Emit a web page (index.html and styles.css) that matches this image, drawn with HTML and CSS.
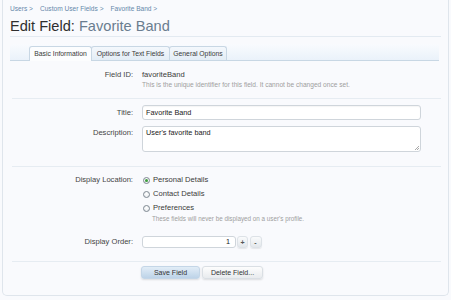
FILE: index.html
```html
<!DOCTYPE html>
<html lang="en">
<head>
<meta charset="utf-8">
<title>Edit Field: Favorite Band</title>
<link rel="stylesheet" href="styles.css">
</head>
<body>
<div class="page">
  <nav class="crumbs">
    <a class="crumb" href="#">Users &gt;</a>
    <a class="crumb" href="#">Custom User Fields &gt;</a>
    <a class="crumb" href="#">Favorite Band &gt;</a>
  </nav>
  <h1 class="title">Edit Field: <span class="title-sub">Favorite Band</span></h1>

  <div class="tabs">
    <span class="tab tab-basic active">Basic Information</span>
    <span class="tab tab-options">Options for Text Fields</span>
    <span class="tab tab-general">General Options</span>
  </div>

  <form class="form">
    <section class="group group-id">
      <div class="row">
        <div class="label">Field ID:</div>
        <div class="value">
          <div class="static">favoriteBand</div>
          <div class="hint">This is the unique identifier for this field. It cannot be changed once set.</div>
        </div>
      </div>
    </section>

    <section class="group group-text">
      <div class="row">
        <div class="label label-input">Title:</div>
        <div class="value"><div class="input">Favorite Band</div></div>
      </div>
      <div class="row row-desc">
        <div class="label label-area">Description:</div>
        <div class="value"><div class="textarea">User's favorite band<span class="grip"></span></div></div>
      </div>
    </section>

    <section class="group group-display">
      <div class="row">
        <div class="label label-radio">Display Location:</div>
        <div class="value">
          <div class="radio"><span class="dot checked"></span>Personal Details</div>
          <div class="radio"><span class="dot"></span>Contact Details</div>
          <div class="radio"><span class="dot"></span>Preferences</div>
          <div class="hint hint-radio">These fields will never be displayed on a user's profile.</div>
        </div>
      </div>
      <div class="row row-order">
        <div class="label label-order">Display Order:</div>
        <div class="value spin">
          <div class="num">1</div>
          <span class="spin-btn">+</span>
          <span class="spin-btn">-</span>
        </div>
      </div>
    </section>

    <div class="submit">
      <span class="button primary">Save Field</span>
      <span class="button">Delete Field...</span>
    </div>
  </form>
</div>
</body>
</html>
```
FILE: styles.css
```css
html, body {
  margin: 0;
  padding: 0;
  background: #f9fafd;
}
body {
  font-family: "Liberation Sans", Arial, sans-serif;
  color: #333;
  height: 300px;
  overflow: hidden;
}
.page {
  margin: 0 2px;
  height: 296px;
  box-sizing: border-box;
  padding: 0 7px;
  border: 1px solid #dfe5ec;
  border-top: none;
  border-radius: 0 0 5px 5px;
  background: #f9fafd;
}
.crumbs {
  display: flex;
  gap: 7px;
  height: 16px;
  line-height: 16px;
  padding-top: 1px;
  font-size: 6.6px;
}
.crumb {
  color: #6688aa;
  text-decoration: none;
}
.title {
  margin: 0;
  font-weight: normal;
  font-size: 14.6px;
  line-height: 18px;
  height: 18px;
  padding-bottom: 1px;
  border-bottom: 1px solid #e3eaf1;
  color: #2e2e2e;
}
.title-sub {
  color: #6a7d8f;
}
.tabs {
  margin-top: 7px;
  height: 15px;
  padding: 1px 0 0 19px;
  display: flex;
  align-items: flex-end;
  border-bottom: 1px solid #c8d7e4;
  border-radius: 4px 0 0 0;
  background: linear-gradient(to bottom, #f9fbfe 0%, #eaf2fa 100%);
  margin-right: 2px;
}
.tab {
  box-sizing: border-box;
  height: 14px;
  line-height: 13px;
  padding: 0;
  text-align: center;
  white-space: nowrap;
  font-size: 6.8px;
  color: #3a3a3a;
  background: linear-gradient(to bottom, #f4f8fc, #e3edf6);
  border: 1px solid #c8d7e4;
  border-bottom: none;
  border-radius: 3px 3px 0 0;
}
.tab + .tab {
  margin-left: -1px;
}
.tab-basic { width: 63px; }
.tab-options { width: 79px; }
.tab-general { width: 58px; }
.tab.active {
  background: #fcfdfe;
  height: 15px;
  margin-bottom: -1px;
  line-height: 14px;
  position: relative;
}
.group {
  margin-left: 2px;
  border-bottom: 1px solid #e6ecf2;
}
.row {
  display: flex;
  gap: 9px;
  font-size: 7.6px;
}
.label {
  width: 121px;
  flex: none;
  text-align: right;
  color: #444;
}
.value {
  flex: none;
  width: 279px;
  color: #3a3a3a;
}
.group-id {
  padding: 8px 0 9px;
}
.group-id .label, .static {
  line-height: 12px;
}
.hint {
  font-size: 6.6px;
  line-height: 8px;
  color: #9e9e9e;
}
.group-text {
  padding: 6px 0 14px;
}
.label-input {
  line-height: 15px;
}
.input {
  box-sizing: border-box;
  height: 15px;
  line-height: 13px;
  padding: 0 3px;
  font-size: 7.3px;
  color: #222;
  background: #fff;
  border: 1px solid #cfd5db;
  border-radius: 3px;
  box-shadow: inset 0 1px 1px rgba(0,0,0,0.04);
}
.row-desc {
  margin-top: 6px;
}
.label-area {
  line-height: 14px;
}
.textarea {
  position: relative;
  box-sizing: border-box;
  height: 26px;
  line-height: 12px;
  padding: 0 3px;
  font-size: 7.3px;
  color: #222;
  background: #fff;
  border: 1px solid #cfd5db;
  border-radius: 3px;
}
.grip {
  position: absolute;
  right: 1px;
  bottom: 1px;
  width: 4px;
  height: 4px;
  background: linear-gradient(135deg, transparent 45%, #aaa 45%, #aaa 55%, transparent 55%, transparent 75%, #aaa 75%, #aaa 85%, transparent 85%);
}
.group-display {
  padding: 6px 0 13px;
}
.label-radio {
  line-height: 14px;
}
.radio {
  display: flex;
  align-items: center;
  height: 14px;
  line-height: 14px;
}
.dot {
  box-sizing: border-box;
  width: 7px;
  height: 7px;
  margin: 0 3.5px 0 0.5px;
  border-radius: 50%;
  border: 1px solid #7d8790;
  background: radial-gradient(circle at 50% 35%, #ffffff, #e4e8ec);
  position: relative;
}
.dot.checked::after {
  content: "";
  position: absolute;
  left: 1px;
  top: 1px;
  width: 3px;
  height: 3px;
  border-radius: 50%;
  background: #3c9c3c;
}
.hint-radio {
  margin-left: 10px;
  line-height: 7px;
  font-size: 6.3px;
}
.row-order {
  margin-top: 14px;
  align-items: center;
}
.label-order {
  line-height: 12px;
}
.spin {
  display: flex;
  align-items: center;
}
.num {
  box-sizing: border-box;
  width: 94px;
  height: 12px;
  line-height: 10px;
  padding: 0 5px;
  text-align: right;
  font-size: 7.3px;
  color: #222;
  background: #fff;
  border: 1px solid #cfd5db;
  border-radius: 3px;
}
.spin-btn {
  box-sizing: border-box;
  width: 11px;
  height: 12px;
  line-height: 11px;
  margin-left: 1px;
  text-align: center;
  font-size: 7px;
  font-weight: bold;
  color: #555;
  background: linear-gradient(to bottom, #fafbfc, #e3e7eb);
  border: 1px solid #dde2e7;
  border-radius: 3px;
  box-shadow: 0 1px 1px rgba(0,0,0,0.08);
}
.spin-btn + .spin-btn {
  margin-left: 1.5px;
  width: 12px;
}
.submit {
  display: flex;
  gap: 2px;
  padding: 4px 0 0 131px;
}
.button {
  box-sizing: border-box;
  height: 13px;
  line-height: 12px;
  width: 61px;
  text-align: center;
  font-size: 7px;
  color: #333;
  background: linear-gradient(to bottom, #fdfdfd, #e8ebee);
  border: 1px solid #dadfe4;
  border-radius: 3px;
  box-shadow: 0 1px 2px rgba(0,0,0,0.12);
}
.button.primary {
  width: 59px;
  background: linear-gradient(to bottom, #e2edf7, #bdd3e8);
  border-color: #c4d6e7;
}
```
